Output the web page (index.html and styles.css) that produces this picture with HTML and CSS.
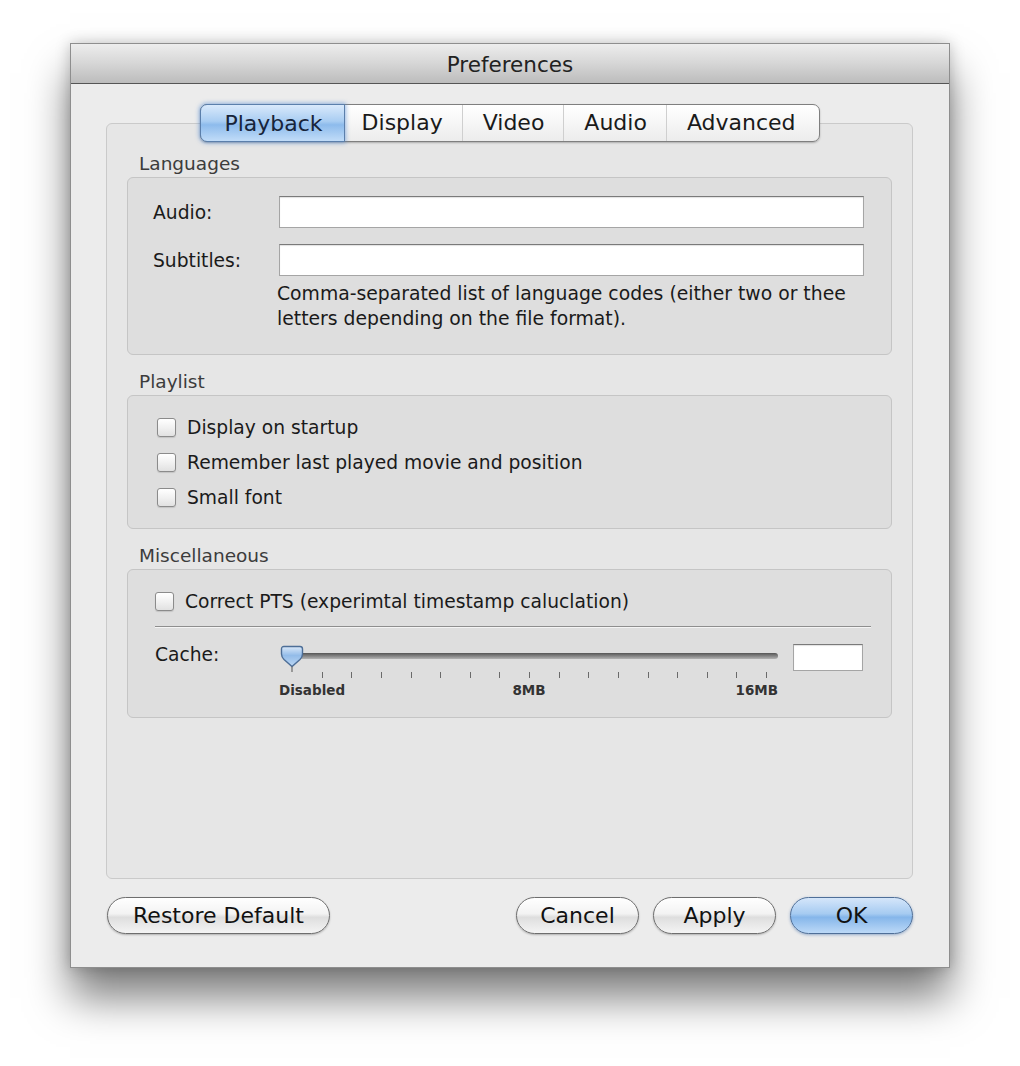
FILE: index.html
```html
<!DOCTYPE html>
<html>
<head>
<meta charset="utf-8">
<title>Preferences</title>
<link rel="stylesheet" href="styles.css">
</head>
<body>
<div class="window">
  <div class="titlebar">Preferences</div>
  <div class="content">
    <div class="tabview">
      <div class="tabs">
        <div class="tab selected">Playback</div>
        <div class="tab t-display">Display</div>
        <div class="tab t-video">Video</div>
        <div class="tab t-audio">Audio</div>
        <div class="tab t-adv">Advanced</div>
      </div>
      <div class="tabbox">
        <div class="grouplabel">Languages</div>
        <div class="group lang">
          <div class="field-row">
            <span class="flabel">Audio:</span>
            <div class="input"></div>
          </div>
          <div class="field-row second">
            <span class="flabel">Subtitles:</span>
            <div class="input"></div>
          </div>
          <p class="help">Comma-separated list of language codes (either two or thee<br>letters depending on the file format).</p>
        </div>

        <div class="grouplabel">Playlist</div>
        <div class="group playlist">
          <div class="check-row"><span class="checkbox"></span>Display on startup</div>
          <div class="check-row"><span class="checkbox"></span>Remember last played movie and position</div>
          <div class="check-row"><span class="checkbox"></span>Small font</div>
        </div>

        <div class="grouplabel">Miscellaneous</div>
        <div class="group misc">
          <div class="check-row pts"><span class="checkbox"></span>Correct PTS (experimtal timestamp caluclation)</div>
          <div class="separator"></div>
          <div class="cache-row">
            <span class="flabel">Cache:</span>
            <div class="slider">
              <div class="track"></div>
              <svg class="thumb" width="24" height="27" viewBox="0 0 24 27">
                <defs>
                  <linearGradient id="tg" x1="0" y1="0" x2="0" y2="1">
                    <stop offset="0" stop-color="#dbe9f9"/>
                    <stop offset="0.45" stop-color="#93bce9"/>
                    <stop offset="1" stop-color="#bdd8f4"/>
                  </linearGradient>
                </defs>
                <path d="M4 1.5 H20 Q22.5 1.5 22.5 4 V9 Q22.5 12 20 14.5 L12 21.5 L4 14.5 Q1.5 12 1.5 9 V4 Q1.5 1.5 4 1.5 Z" fill="url(#tg)" stroke="#4d6e97" stroke-width="1.4"/>
                <line x1="12" y1="21.5" x2="12" y2="27" stroke="#6a6a6a" stroke-width="1.2"/>
              </svg>
              <div class="ticks">
                <i></i><i></i><i></i><i></i><i></i><i></i><i></i><i></i><i></i><i></i><i></i><i></i><i></i><i></i><i></i><i></i><i></i>
              </div>
              <span class="tl tl-min">Disabled</span>
              <span class="tl tl-mid">8MB</span>
              <span class="tl tl-max">16MB</span>
            </div>
            <div class="input small"></div>
          </div>
        </div>
      </div>
    </div>
    <div class="buttons">
      <div class="btn restore">Restore Default</div>
      <div class="spacer"></div>
      <div class="btn">Cancel</div>
      <div class="btn">Apply</div>
      <div class="btn default">OK</div>
    </div>
  </div>
</div>
</body>
</html>
```
FILE: styles.css
```css
* { box-sizing: border-box; }
html, body { margin: 0; padding: 0; background: #ffffff; }
html { min-height: 1066px; }
body {
  font-family: "DejaVu Sans", "Liberation Sans", sans-serif;
  color: #1a1a1a;
  padding: 43px 0 98px 70px;
  min-height: 1066px;
}
.window {
  width: 880px;
  height: 925px;
  background: #ececec;
  border: 1px solid #8e8e8e;
  box-shadow: 0 30px 40px rgba(0,0,0,0.5), 0 0 14px rgba(0,0,0,0.22);
  display: flex;
  flex-direction: column;
}
.titlebar {
  height: 40px;
  flex: none;
  background: linear-gradient(#ededed, #d6d6d6 50%, #bcbcbc);
  border-bottom: 1px solid #555;
  text-align: center;
  font-size: 21.5px;
  line-height: 41px;
  color: #222;
  border-radius: 4px 4px 0 0;
}
.content {
  flex: 1;
  display: flex;
  flex-direction: column;
  padding: 20px 36px 32px 35px;
}
.tabview { display: flex; flex-direction: column; }
.tabs {
  align-self: center;
  display: flex;
  height: 38px;
  position: relative;
  z-index: 2;
  border: 1px solid #7f7f7f;
  border-radius: 7px;
  background: linear-gradient(#ffffff, #f6f6f6 50%, #ececec);
  box-shadow: 0 1px 2px rgba(0,0,0,0.25);
  margin-left: 1px;
}
.tab {
  font-size: 22px;
  line-height: 36px;
  padding: 0 19px 0 17px;
  border-left: 1px solid #cfcfcf;
  color: #1a1a1a;
}
.tab.t-video { padding: 0 19px 0 20px; }
.tab.t-audio { padding: 0 19px 0 20px; }
.tab.t-adv { padding: 0 23px 0 20px; }
.tab.selected {
  margin: -1px 0 -1px -1px;
  padding: 0 21px 0 23px;
  line-height: 38px;
  border: 1px solid #5b7fab;
  border-radius: 7px 0 0 7px;
  background: linear-gradient(#d9e9fb, #a9cdf2 45%, #8dbbec 55%, #c1dcf8);
  box-shadow: 0 0 4px 1px rgba(70,130,210,0.55);
  color: #17243a;
}
.tab.selected + .tab { border-left: none; }
.tabbox {
  margin-top: -19px;
  height: 756px;
  border: 1px solid #cacaca;
  border-radius: 6px;
  background: #e6e6e6;
  padding: 29px 20px 0 20px;
}
.grouplabel {
  font-size: 18.5px;
  line-height: 22px;
  color: #3c3c3c;
  padding-left: 12px;
  margin-bottom: 2px;
}
.group {
  border: 1px solid #c5c5c5;
  border-radius: 6px;
  background: #dedede;
  margin-bottom: 16px;
}
.lang { height: 178px; padding: 18px 27px 0 25px; }
.field-row { display: flex; align-items: center; height: 32px; }
.field-row.second { margin-top: 16px; }
.flabel { width: 126px; font-size: 18.7px; flex: none; }
.input {
  flex: 1;
  height: 32px;
  background: #fff;
  border: 1px solid #a5a5a5;
  border-top-color: #7a7a7a;
  box-shadow: inset 0 1px 1px rgba(0,0,0,0.12);
}
.help {
  margin: 5px 0 0 124px;
  font-size: 18.8px;
  line-height: 25px;
  white-space: nowrap;
}
.playlist { height: 134px; padding: 14px 0 0 29px; }
.check-row {
  display: flex;
  align-items: center;
  height: 35px;
  font-size: 18.7px;
}
.checkbox {
  width: 19px;
  height: 19px;
  margin-right: 11px;
  border: 1px solid #8b8b8b;
  border-radius: 3px;
  background: linear-gradient(#ffffff, #f1f1f1 50%, #e1e1e1);
  box-shadow: 0 1px 1px rgba(0,0,0,0.12);
  flex: none;
}
.misc { height: 149px; padding: 14px 20px 0 27px; }
.pts { height: 35px; }
.separator {
  background: #8e8e8e;
  border-bottom: 1px solid #f4f4f4;
  margin: 7px 0 0 0;
  height: 2px;
}
.cache-row {
  display: flex;
  align-items: flex-start;
  margin-top: 16px;
}
.cache-row .flabel { line-height: 22px; }
.slider {
  position: relative;
  width: 498px;
  height: 62px;
}
.track {
  position: absolute;
  left: 2px;
  top: 9px;
  width: 495px;
  height: 6px;
  border-radius: 3px;
  background: linear-gradient(#555, #8d8d8d 60%, #b4b4b4);
}
.thumb { position: absolute; left: -1px; top: 1px; }
.ticks {
  position: absolute;
  left: 11px;
  top: 28px;
  width: 475px;
  display: flex;
  justify-content: space-between;
}
.ticks i {
  display: block;
  width: 1px;
  height: 6px;
  background: #6a6a6a;
}
.ticks i:first-child { visibility: hidden; }
.tl {
  position: absolute;
  top: 38px;
  font-size: 13.5px;
  font-weight: bold;
  color: #333;
  line-height: 16px;
}
.tl-min { left: -2px; }
.tl-mid { left: 248px; transform: translateX(-50%); }
.tl-max { right: 1px; }
.input.small {
  flex: none;
  width: 70px;
  height: 27px;
  margin-left: 14px;
}
.buttons {
  display: flex;
  align-items: center;
  margin-top: 18px;
  padding-left: 1px;
  gap: 14px;
}
.spacer { flex: 1; }
.btn {
  height: 37px;
  min-width: 123px;
  padding: 0 22px;
  border: 1px solid #6e6e6e;
  border-radius: 19px;
  background: linear-gradient(#ffffff, #f3f3f3 45%, #dedede 55%, #f4f4f4);
  box-shadow: 0 1px 2px rgba(0,0,0,0.25);
  font-size: 22px;
  line-height: 35px;
  text-align: center;
  color: #111;
}
.btn.restore { width: 223px; }
.btn.default {
  border-color: #4f6f98;
  background: linear-gradient(#d5e6fa, #a6cbf1 45%, #85b6ea 55%, #bcd9f7);
  box-shadow: 0 1px 3px rgba(40,90,160,0.45);
}
```
